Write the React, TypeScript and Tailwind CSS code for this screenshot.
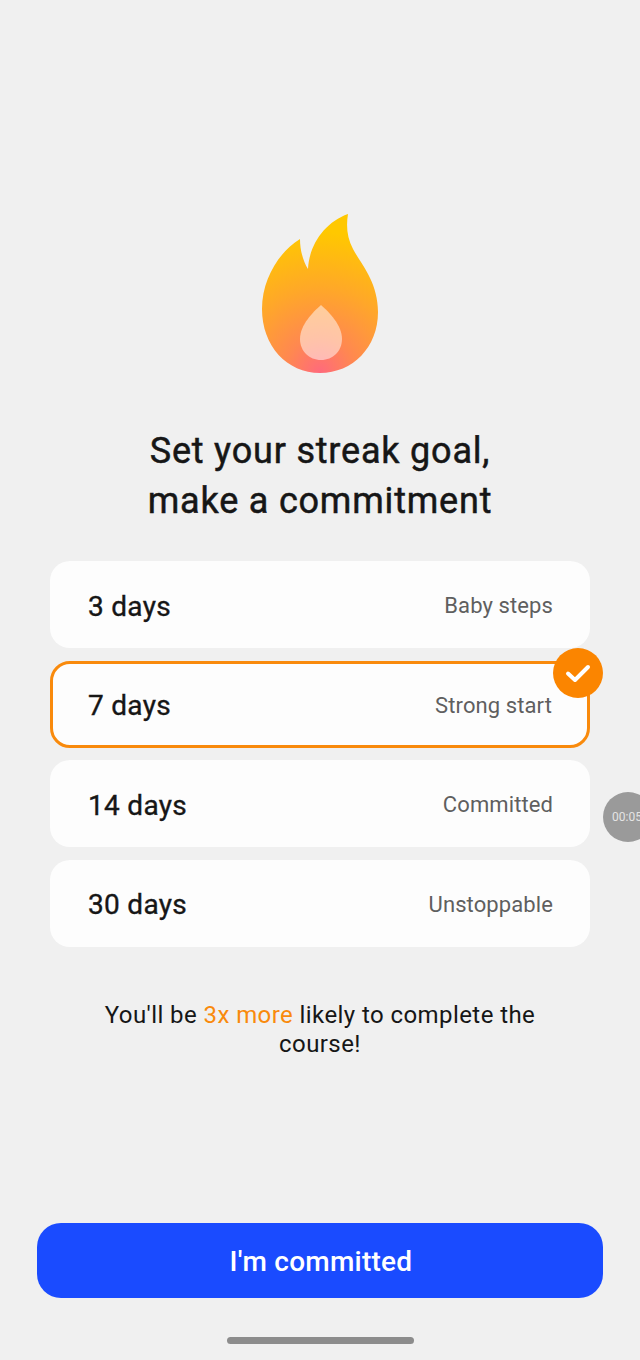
import React from 'react';

const goals = [
  { days: '3 days', label: 'Baby steps', selected: false },
  { days: '7 days', label: 'Strong start', selected: true },
  { days: '14 days', label: 'Committed', selected: false },
  { days: '30 days', label: 'Unstoppable', selected: false },
];

function Flame() {
  return (
    <svg width="120" height="160" viewBox="260 213 120 160" fill="none">
      <defs>
        <radialGradient id="flame" gradientUnits="userSpaceOnUse" cx="320" cy="372" r="140">
          <stop offset="0" stopColor="#ff6a7c" />
          <stop offset="0.25" stopColor="#ff8850" />
          <stop offset="0.6" stopColor="#ffa828" />
          <stop offset="1" stopColor="#ffc800" />
        </radialGradient>
      </defs>
      <path
        d="M348 214C346 226 347 238 353 249C361 264 378 282 378 312C378 347 353 373 320 373C287 373 262 346 262 309C262 279 279 252 300 239C300 250 303 261 308 269C309 245 325 222 348 214Z"
        fill="url(#flame)"
      />
      <path
        d="M321 305C329 312 342 325 342 339C342 351 333 360 321 360C309 360 300 351 300 339C300 325 313 312 321 305Z"
        fill="#ffffff"
        fillOpacity="0.5"
      />
    </svg>
  );
}

export default function App() {
  return (
    <div className="relative h-[1360px] w-[640px] overflow-hidden bg-[#f0f0f0] font-['Roboto',sans-serif] text-[#161616]">
      <div className="flex h-full flex-col items-center pt-[213px]">
        <Flame />

        <h1 className="mt-[54px] text-center text-[36px] leading-[49.5px] font-normal tracking-[0.8px] [-webkit-text-stroke:0.5px_#161616]">
          Set your streak goal,
          <br />
          make a commitment
        </h1>

        {/* Goal options */}
        <div className="mt-[35px] flex w-[540px] flex-col gap-[12.5px]">
          {goals.map(goal => (
            <div
              key={goal.days}
              className={`relative flex h-[87px] items-center justify-between rounded-[20px] bg-[#fdfdfd] pt-[4px] ${
                goal.selected ? 'border-[3px] border-[#f98a0c] pr-[35px] pl-[35px]' : 'pr-[37px] pl-[38px]'
              }`}
            >
              <span className="text-[28px] tracking-[0.3px] [-webkit-text-stroke:0.35px_#161616]">{goal.days}</span>
              <span className="pb-[2px] text-[22px] tracking-[0.1px] text-[#5f5f5f]">{goal.label}</span>
              {goal.selected && (
                <div className="absolute -top-[16px] -right-[16px] flex h-[50px] w-[50px] items-center justify-center rounded-full bg-[#fb8500]">
                  <svg width="26" height="20" viewBox="0 0 26 20" fill="none">
                    <path d="M3 10.5L10 17L23 4" stroke="#fff" strokeWidth="4" strokeLinecap="round" strokeLinejoin="round" />
                  </svg>
                </div>
              )}
            </div>
          ))}
        </div>

        <p className="mt-[54px] w-[480px] text-center text-[24px] leading-[29px] tracking-[0.42px]">
          You'll be <span className="text-[#f98a0c]">3x more</span> likely to complete the course!
        </p>

        <button className="mt-auto h-[75px] w-[566px] rounded-[24px] bg-[#1a4bff] pt-[2px] pl-[2px] text-[28px] font-medium tracking-[0.25px] text-white">
          I'm committed
        </button>

        {/* Home indicator */}
        <div className="mt-[39px] mb-[16px] h-[7px] w-[187px] rounded-full bg-[#8c8c8c]" />
      </div>

      {/* Recording timer bubble */}
      <div className="absolute top-[792px] left-[603px] flex h-[50px] w-[50px] items-center rounded-full bg-[#9a9a9a] pl-[9px]">
        <span className="text-[12px] text-[#e4e4e4]">00:05</span>
      </div>
    </div>
  );
}
